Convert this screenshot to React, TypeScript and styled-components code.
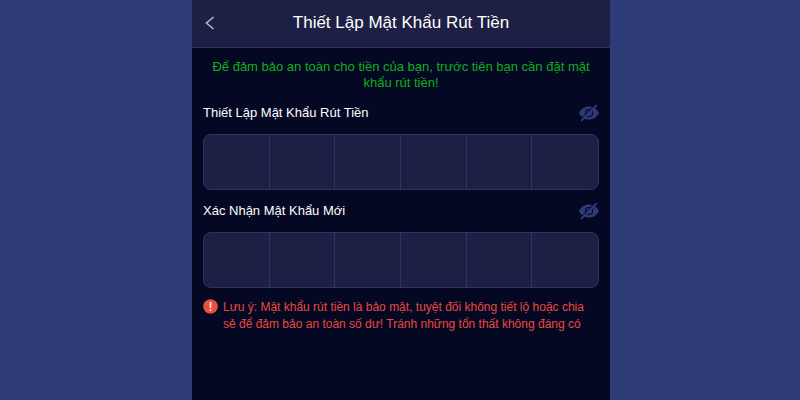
import React, { useId, useState } from "react";
import styled, { createGlobalStyle } from "styled-components";

const GlobalStyle = createGlobalStyle`
  *, *::before, *::after { box-sizing: border-box; }
  body {
    margin: 0;
    background: #2d3c77;
    font-family: "Liberation Sans", Arial, sans-serif;
  }
`;

const Page = styled.div`
  display: flex;
  justify-content: center;
  min-height: 100vh;
  padding-left: 2px;
`;

const Screen = styled.main`
  width: 100%;
  max-width: 418px;
  background: #050822;
`;

const Header = styled.header`
  display: grid;
  grid-template-columns: 36px 1fr 36px;
  align-items: center;
  height: 48px;
  padding-bottom: 2px;
  background: #1e1f45;
  border-bottom: 1px solid #2d3560;
`;

const IconButton = styled.button`
  display: flex;
  align-items: center;
  justify-content: center;
  padding: 0;
  border: 0;
  background: none;
  color: inherit;
  cursor: pointer;
`;

const BackButton = styled(IconButton)`
  height: 40px;
  color: #b9b9d6;
`;

const Title = styled.h1`
  margin: 0;
  color: #ffffff;
  font-size: 17px;
  font-weight: 400;
  line-height: 24px;
  text-align: center;
`;

const Content = styled.div`
  padding: 11px 11px 0;
`;

const Hint = styled.p`
  margin: 0 0 1px;
  color: #0fae1c;
  font-size: 13px;
  line-height: 16px;
  text-align: center;
`;

const Field = styled.section`
  padding-top: 9px;
`;

const FieldHead = styled.div`
  display: flex;
  align-items: center;
  justify-content: space-between;
  height: 24px;
  margin-bottom: 9px;
`;

const FieldLabel = styled.label`
  color: #ffffff;
  font-size: 13px;
  line-height: 20px;
`;

const EyeButton = styled(IconButton)`
  color: #2d3a75;
`;

const Cells = styled.div`
  display: grid;
  grid-template-columns: repeat(6, 1fr);
  height: 56px;
  overflow: hidden;
  border: 1px solid #2d3560;
  border-radius: 8px;
  background: #1e1f45;
`;

const Cell = styled.input`
  width: 100%;
  min-width: 0;
  padding: 0;
  border: 0;
  border-radius: 0;
  outline: 0;
  background: none;
  color: #ffffff;
  font: inherit;
  font-size: 20px;
  text-align: center;

  &:not(:last-child) {
    border-right: 1px solid #2d3560;
  }
`;

const Warning = styled.div`
  display: flex;
  align-items: flex-start;
  gap: 5px;
  padding-top: 11px;
`;

const WarningIcon = styled.svg`
  flex: none;
`;

const WarningText = styled.p`
  margin: 0;
  color: #e8483f;
  font-size: 12px;
  line-height: 17px;
`;

function EyeOff() {
  return (
    <svg width="20" height="18" viewBox="0 0 20 18" aria-hidden="true">
      <path
        fill="currentColor"
        fillRule="evenodd"
        d="M0 9C2 4.600 5.600 2.400 10 2.400S18 4.600 20 9C18 13.400 14.400 15.600 10 15.600S2 13.400 0 9ZM10 4.900A4.100 4.100 0 1 0 10 13.100A4.100 4.100 0 1 0 10 4.900ZM10 6A3 3 0 1 1 10 12A3 3 0 1 1 10 6Z"
      />
      <path d="M2.500 14.500L15 1.500" stroke="#050822" strokeWidth="1" />
      <path d="M2.600 16.400L17.400 1.400" stroke="currentColor" strokeWidth="1.900" strokeLinecap="round" />
    </svg>
  );
}

function PasswordField({ label }: { label: string }) {
  const id = useId();
  const [visible, setVisible] = useState(false);
  return (
    <Field>
      <FieldHead>
        <FieldLabel id={`${id}-label`} htmlFor={`${id}-0`}>{label}</FieldLabel>
        <EyeButton
          type="button"
          aria-label="Hiện mật khẩu"
          aria-pressed={visible}
          onClick={() => setVisible(!visible)}
        >
          <EyeOff />
        </EyeButton>
      </FieldHead>
      <Cells role="group" aria-labelledby={`${id}-label`}>
        {[0, 1, 2, 3, 4, 5].map((i) => (
          <Cell
            key={i}
            id={`${id}-${i}`}
            type={visible ? "text" : "password"}
            inputMode="numeric"
            maxLength={1}
            autoComplete="off"
            aria-label={`${label} ${i + 1}`}
          />
        ))}
      </Cells>
    </Field>
  );
}

export default function App() {
  return (
    <>
      <GlobalStyle />
      <Page>
        <Screen>
          <Header>
            <BackButton type="button" aria-label="Quay lại">
              <svg width="10" height="14" viewBox="0 0 10 14" fill="none" aria-hidden="true">
                <path d="M8.500 1L1.500 7L8.500 13" stroke="currentColor" strokeWidth="1.500" />
              </svg>
            </BackButton>
            <Title>Thiết Lập Mật Khẩu Rút Tiền</Title>
          </Header>
          <Content>
            <Hint>Để đảm bảo an toàn cho tiền của bạn, trước tiên bạn cần đặt mật khẩu rút tiền!</Hint>
            <PasswordField label="Thiết Lập Mật Khẩu Rút Tiền" />
            <PasswordField label="Xác Nhận Mật Khẩu Mới" />
            <Warning>
              <WarningIcon width="15" height="15" viewBox="0 0 15 15" aria-hidden="true">
                <circle cx="7.500" cy="7.500" r="7.300" fill="#e8503f" />
                <path d="M6.500 3H8.500L8.200 9H6.800Z" fill="#ffe3dc" />
                <circle cx="7.500" cy="11" r="1" fill="#ffe3dc" />
              </WarningIcon>
              <WarningText>
                Lưu ý: Mật khẩu rút tiền là bảo mật, tuyệt đối không tiết lộ hoặc chia sẻ để đảm bảo an toàn số dư! Tránh những tổn thất không đáng có
              </WarningText>
            </Warning>
          </Content>
        </Screen>
      </Page>
    </>
  );
}
